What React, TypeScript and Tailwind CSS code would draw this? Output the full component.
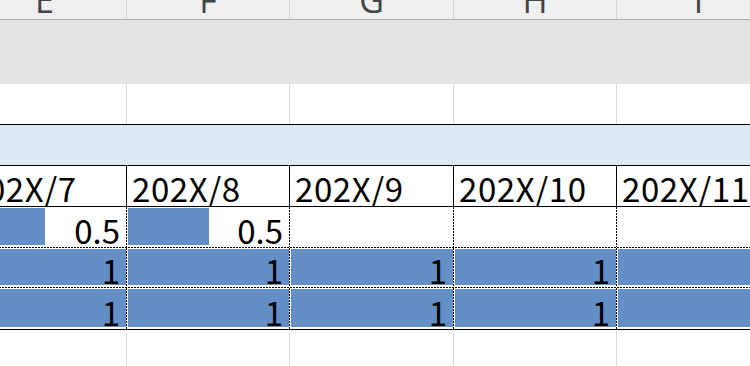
import React from "react";

type Line = "grid" | "black" | "dash" | "none";

interface Col {
  letter: string;
  w: string;
}

const cols: Col[] = [
  { letter: "E", w: "w-[164px]" },
  { letter: "F", w: "w-[163px]" },
  { letter: "G", w: "w-[164px]" },
  { letter: "H", w: "w-[163px]" },
  { letter: "I", w: "w-[164px]" },
];

const months = ["202X/7", "202X/8", "202X/9", "202X/10", "202X/11"];

const cellFont = "font-['Noto_Sans_CJK_JP','Liberation_Sans',sans-serif] text-[33px] text-black";

// a 1px line between cells, drawn as its own flex item
const VLine = ({ kind }: { kind: Line }) => {
  if (kind === "none") return null;
  if (kind === "dash")
    return <div className="w-px shrink-0 self-stretch bg-[repeating-linear-gradient(180deg,#000_0_2px,#fff_2px_3px)]" />;
  if (kind === "black") return <div className="w-px shrink-0 self-stretch bg-black" />;
  return <div className="w-px shrink-0 self-stretch bg-[#dadada]" />;
};

const HLine = ({ kind }: { kind: Line }) => {
  if (kind === "dash")
    return <div className="h-px w-full bg-[repeating-linear-gradient(90deg,#000_0_2px,#fff_2px_3px)]" />;
  if (kind === "black") return <div className="h-px w-full bg-black" />;
  if (kind === "grid") return <div className="h-px w-full bg-[#dadada]" />;
  return null;
};

interface RowProps {
  h: string;
  bg?: string;
  v: Line;
  bottom: Line;
  children?: (i: number) => React.ReactNode;
}

const Row: React.FC<RowProps> = ({ h, bg = "bg-white", v, bottom, children }) => (
  <div className={`flex flex-col ${bg}`}>
    <div className={`flex ${h}`}>
      {cols.map((c, i) => (
        <div key={c.letter} className={`flex ${c.w} shrink-0`}>
          <div className="flex min-w-0 flex-1 overflow-hidden">{children ? children(i) : null}</div>
          <VLine kind={v} />
        </div>
      ))}
    </div>
    <HLine kind={bottom} />
  </div>
);

// data bar cell: bar sits under the right-aligned number
const BarCell = ({ value }: { value: number | null }) => (
  <div className="flex flex-1 pt-px pb-[2px] pl-px">
    {value !== null && (
      <div className="relative flex flex-1 items-end justify-end">
        <div className="absolute inset-y-0 left-0 bg-[#638ec6]" style={{ width: `${value * 100}%` }} />
        <span className={`relative pr-[6px] leading-[30px] ${cellFont}`}>{value}</span>
      </div>
    )}
  </div>
);

export default function App() {
  return (
    <div className="h-[366px] w-[750px] overflow-hidden bg-white">
      <div className="ml-[-37px] w-[820px]">
        {/* column letters, scrolled so only their lower half shows */}
        <div className="flex h-[20px] border-b border-[#ababab] bg-[#efefef]">
          {cols.map((c) => (
            <div key={c.letter} className={`flex ${c.w} shrink-0`}>
              <div className="flex-1 overflow-hidden text-center">
                <span className="mt-[-17px] block font-['Open_Sans','Liberation_Sans',sans-serif] text-[34px] leading-[34px] text-[#444]">
                  {c.letter}
                </span>
              </div>
              <div className="w-px bg-[#d6d6d6]" />
            </div>
          ))}
        </div>

        <div className="h-[64px] bg-[#e4e4e4]" />

        <Row h="h-[40px]" v="grid" bottom="black" />
        <Row h="h-[40px]" bg="bg-[#dde9f5]" v="none" bottom="black" />

        <Row h="h-[40px]" v="black" bottom="black">
          {(i) => (
            <div className="flex flex-1 items-end pl-[5px] pb-[1px]">
              <span className={`whitespace-nowrap leading-[34px] tracking-[0.6px] ${cellFont}`}>{months[i]}</span>
            </div>
          )}
        </Row>

        <Row h="h-[40px]" v="dash" bottom="dash">
          {(i) => <BarCell value={i < 2 ? 0.5 : null} />}
        </Row>
        <Row h="h-[39px]" v="dash" bottom="dash">
          {() => <BarCell value={1} />}
        </Row>
        <Row h="h-[41px]" v="dash" bottom="black">
          {() => <BarCell value={1} />}
        </Row>

        <Row h="h-[40px]" v="grid" bottom="none" />
      </div>
    </div>
  );
}
